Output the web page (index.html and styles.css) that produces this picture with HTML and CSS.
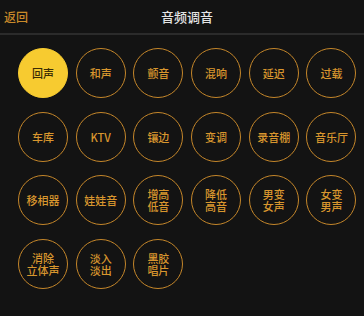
FILE: index.html
```html
<!DOCTYPE html>
<html lang="zh">
<head>
    <meta charset="UTF-8">
    <meta name="viewport" content="width=device-width, initial-scale=1.0">
    <title>音频调音</title>
    <link rel="stylesheet" href="styles.css">
</head>
<body>
    <div class="header">
        <span class="back">返回</span>
        <span class="title">音频调音</span>
    </div>
    <div class="effects">
        <div class="effect on">回声</div>
        <div class="effect">和声</div>
        <div class="effect">颤音</div>
        <div class="effect">混响</div>
        <div class="effect">延迟</div>
        <div class="effect">过载</div>
        <div class="effect">车库</div>
        <div class="effect">KTV</div>
        <div class="effect">镶边</div>
        <div class="effect">变调</div>
        <div class="effect">录音棚</div>
        <div class="effect">音乐厅</div>
        <div class="effect">移相器</div>
        <div class="effect">娃娃音</div>
        <div class="effect">增高<br>低音</div>
        <div class="effect">降低<br>高音</div>
        <div class="effect">男变<br>女声</div>
        <div class="effect">女变<br>男声</div>
        <div class="effect">消除<br>立体声</div>
        <div class="effect">淡入<br>淡出</div>
        <div class="effect">黑胶<br>唱片</div>
    </div>
</body>
</html>
```

FILE: styles.css
```css
body {
    margin: 0;
    height: 100vh;
    background-color: #131313;
    font-family: 'Noto Sans CJK SC', 'Noto Sans', sans-serif;
    color: #d8962e;
}
.header {
    height: 33px;
    border-bottom: 2px solid #2b2b2b;
    display: flex;
    align-items: center;
    justify-content: center;
    position: relative;
}
.back {
    position: absolute;
    left: 4px;
    top: 8px;
    font-size: 12px;
    font-weight: 500;
    color: #c98a2a;
}
.title {
    margin-left: 10px;
    font-size: 13px;
    font-weight: 500;
    color: #e4e4e4;
}
.effects {
    display: grid;
    grid-template-columns: repeat(6, 50px);
    column-gap: 7.7px;
    row-gap: 13.5px;
    padding: 13px 0 0 18px;
}
.effect {
    width: 50px;
    height: 50px;
    box-sizing: border-box;
    border: 1.6px solid #c4862a;
    border-radius: 50%;
    display: flex;
    justify-content: center;
    align-items: center;
    text-align: center;
    font-size: 11px;
    line-height: 12px;
    font-weight: 500;
    color: #d8962e;
}
.effect.on {
    background-color: #f7cb30;
    border-color: #f7cb30;
    color: #3a2c06;
}
```
